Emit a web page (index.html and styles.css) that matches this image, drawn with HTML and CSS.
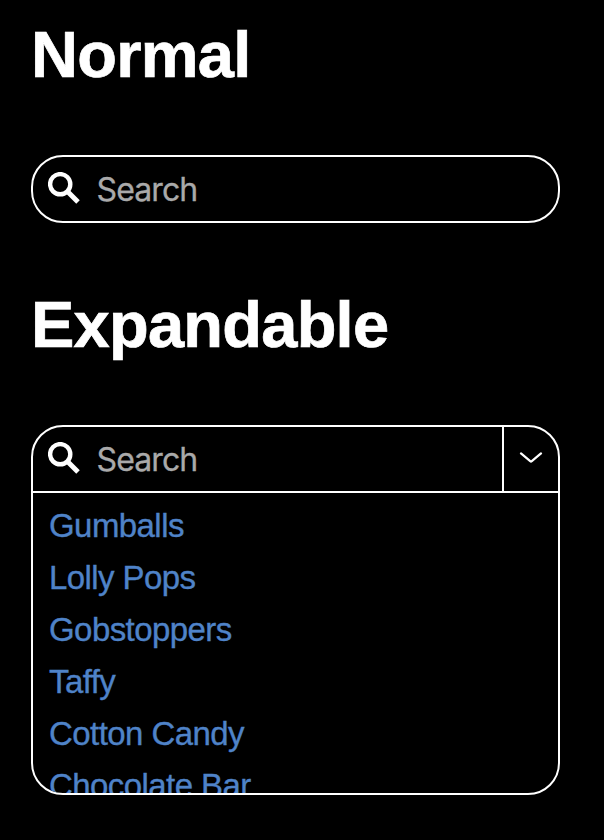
FILE: index.html
```html
<!DOCTYPE html>
<html lang="en">
<head>
<meta charset="utf-8">
<title>Search</title>
<link rel="stylesheet" href="styles.css">
</head>
<body>
<h1 class="title">Normal</h1>
<div class="search">
  <div class="bar">
    <svg class="glass" viewBox="0 0 32 32"><circle cx="12.2" cy="12.2" r="10.1"/><path d="M18.5 18.5L30 30"/></svg>
    <span class="hint">Search</span>
  </div>
</div>
<h1 class="title second">Expandable</h1>
<div class="search expanded">
  <div class="bar">
    <svg class="glass" viewBox="0 0 32 32"><circle cx="12.2" cy="12.2" r="10.1"/><path d="M18.5 18.5L30 30"/></svg>
    <span class="hint">Search</span>
    <button class="toggle" aria-label="Toggle"><svg class="chevron" viewBox="0 0 24 12"><path d="M2 1.4L11.2 9.2Q12 9.8 12.8 9.2L22 1.4"/></svg></button>
  </div>
  <ul class="list">
    <li><span>Gumballs</span></li>
    <li><span>Lolly Pops</span></li>
    <li><span>Gobstoppers</span></li>
    <li><span>Taffy</span></li>
    <li><span>Cotton Candy</span></li>
    <li><span>Chocolate Bar</span></li>
  </ul>
</div>
</body>
</html>
```
FILE: styles.css
```css
* { box-sizing: border-box; }
body { margin: 0; padding: 18px 44px 0 31px; height: 840px; overflow: hidden; background: #000; color: #fff; font-family: "Liberation Sans", Arial, sans-serif; }
.title { margin: 0; height: 137px; font-size: 65px; line-height: 73px; font-weight: 700; letter-spacing: -0.75px; -webkit-text-stroke: 0.7px #fff; }
.second { margin-top: 65px; }
.search { height: 68px; border: 2px solid #fff; border-radius: 32px; overflow: hidden; }
.bar { display: flex; align-items: center; height: 64px; padding-left: 15px; }
.glass { width: 32px; height: 32px; margin-bottom: 2px; fill: none; stroke: #fff; stroke-width: 4.4; }
.glass path { stroke-width: 5; }
.hint { flex: 1; padding-top: 2px; margin-left: 16.5px; color: #a9a9a9; font-family: Inter, "Liberation Sans", sans-serif; font-size: 32px; line-height: 40px; letter-spacing: -0.9px; -webkit-text-stroke: 0.3px #a9a9a9; }
.expanded { height: 370px; }
.expanded .bar { height: 66px; border-bottom: 2px solid #fff; }
.toggle { width: 56px; height: 64px; padding: 0; border: 0; border-left: 2px solid #fff; background: none; }
.chevron { width: 24px; height: 12px; fill: none; stroke: #fff; stroke-width: 2.2; stroke-linecap: round; }
.list { margin: 0; padding: 7px 16px; list-style: none; color: #4f83c8; font-size: 33px; line-height: 52px; letter-spacing: -0.57px; -webkit-text-stroke: 0.35px #4f83c8; }
```
